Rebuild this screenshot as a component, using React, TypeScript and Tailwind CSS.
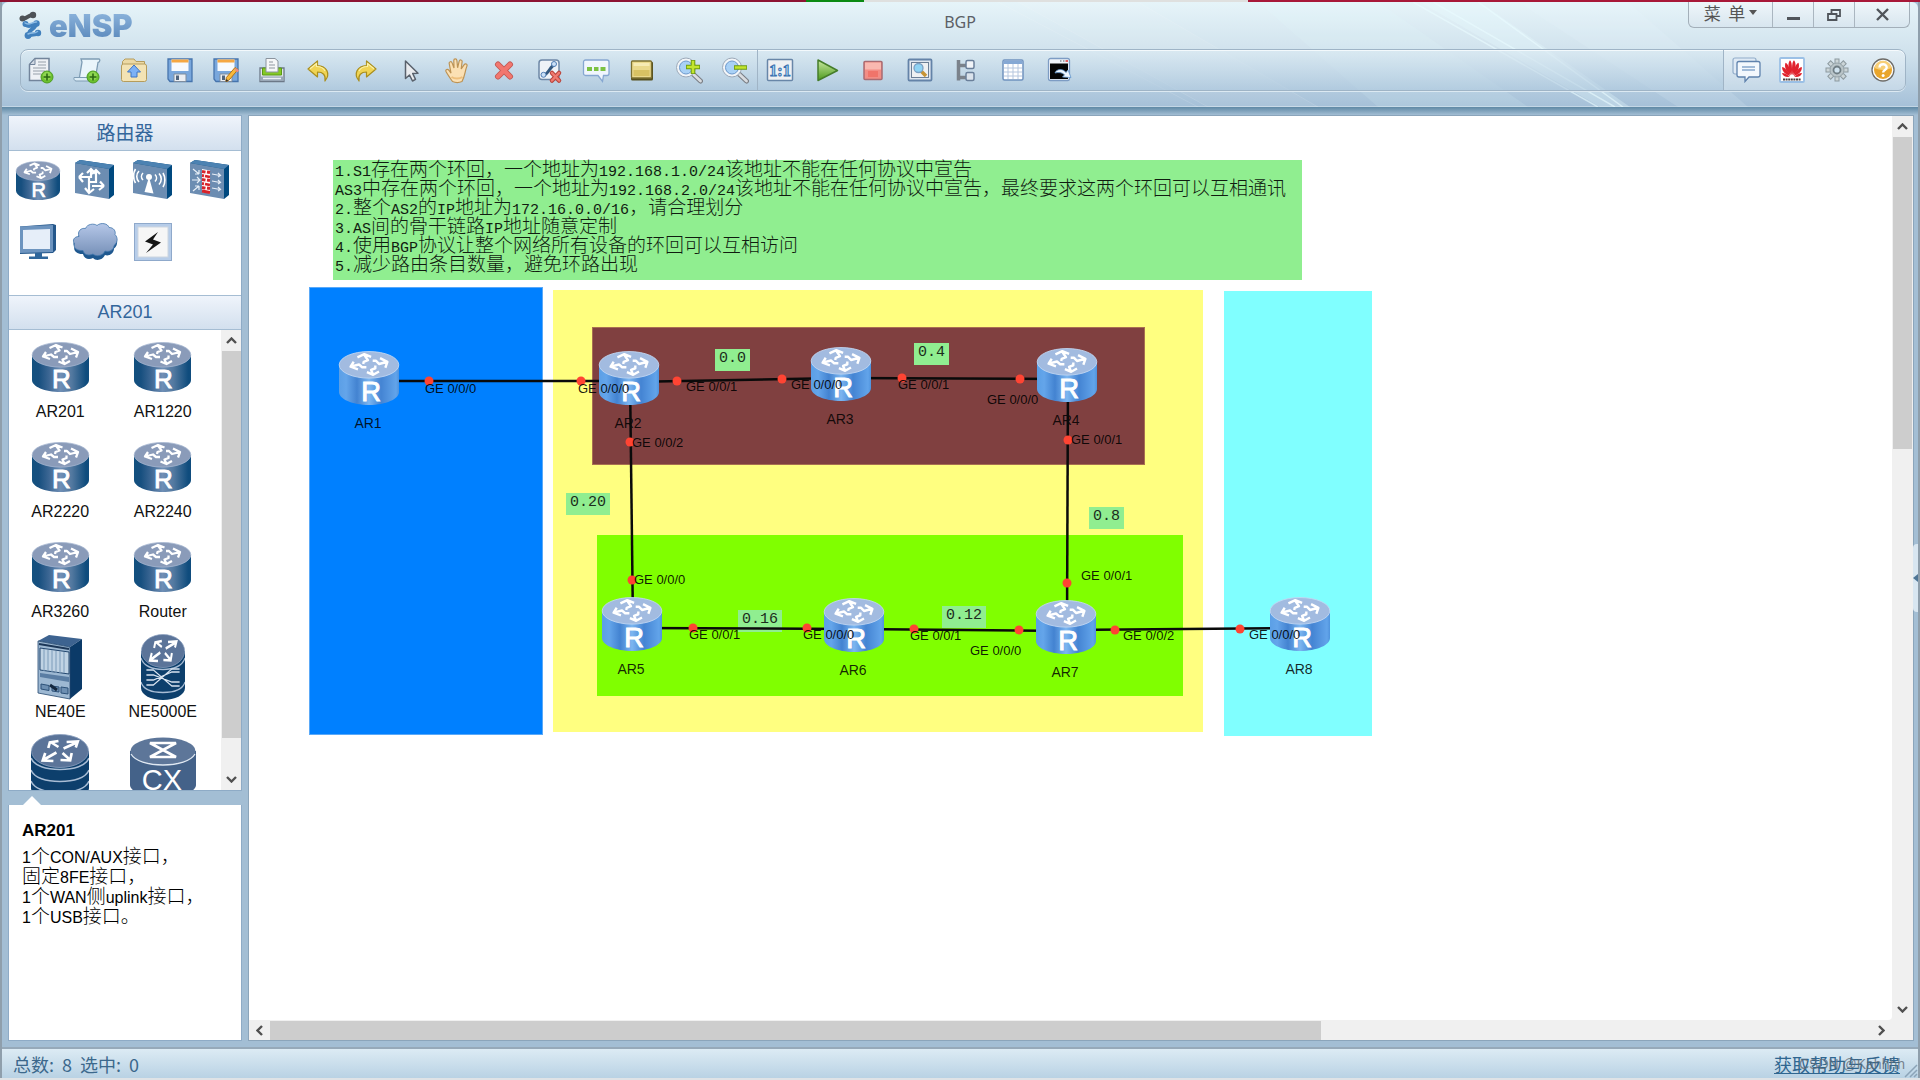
import React from "react";

type Kids = { children?: React.ReactNode };

/* ---------- text ---------- */

const CJK = /([\u3000-\u303f\u4e00-\u9fff\uff00-\uffef]+)/;

/** Sets Chinese runs a little larger than the Latin text around them. */
function Mixed({ text }: { text: string }) {
  return (
    <>
      {text.split(CJK).map((run, i) =>
        CJK.test(run) ? (
          <span key={i} className="font-['Noto_Sans_CJK_SC',sans-serif] text-[19px] font-light">
            {run}
          </span>
        ) : (
          run
        ),
      )}
    </>
  );
}

/* ---------- toolbar icons ---------- */

function Ico({ children }: Kids) {
  return (
    <svg width="28" height="28" viewBox="0 0 28 28" fill="none" aria-hidden="true">
      {children}
    </svg>
  );
}

const Plus = ({ x = 19, y = 21 }: { x?: number; y?: number }) => (
  <g>
    <circle cx={x} cy={y} r="6" fill="#6cc02e" stroke="#4c9c22" />
    <circle cx={x} cy={y - 1} r="4.2" fill="#a5e468" opacity="0.6" />
    <path d={`M${x - 3.5} ${y}h7M${x} ${y - 3.5}v7`} stroke="#2c6a12" strokeWidth="1.6" />
  </g>
);

const NewFile = () => (
  <Ico>
    <path d="M2.500 8.500 8 2.500h14v22h-19.500z" fill="#eef1f5" stroke="#72849b" strokeWidth="1.5" />
    <path d="M2.500 8.500 8 2.500v6z" fill="#d0d8e2" stroke="#72849b" />
    <path d="M11 6h8M11 9h8M6 12h13M6 15h12M6 18h8" stroke="#b4bac2" strokeWidth="1.5" />
    <Plus x={20} y={21} />
  </Ico>
);
const NewPaper = () => (
  <Ico>
    <path d="M8 3h18c1 0 1.500 3-1 3.500L22 24H6L9 6z" fill="#eaf5fb" stroke="#7e9cb4" strokeWidth="1.3" />
    <path d="M1 21.500h14c-1 2 0 3.500 1 3.500H3c-1.500 0-2.500-2-2-3.500z" fill="#dcecf6" stroke="#7e9cb4" />
    <Plus x={20} y={21} />
  </Ico>
);
const Folder = () => (
  <Ico>
    <path d="M2.500 5.500 5 3h9l2 2.500h8.500v4h-22z" fill="#ecd9a4" stroke="#b59c5c" />
    <rect x="1.500" y="8" width="25" height="17.500" rx="2" fill="#f3e3b4" stroke="#b59c5c" />
    <path d="m14 9 6.500 7H17v5h-6v-5H7.500z" fill="#7db1f5" stroke="#3f74c4" />
  </Ico>
);
const Disk = ({ edit = false }: { edit?: boolean }) => (
  <Ico>
    <path d="M2 3h24v22.500H4L2 23z" fill="#79a7dc" stroke="#4674ad" strokeWidth="1.3" />
    <path d="M5.500 3.500h17V15h-17z" fill="#f7fafd" />
    <path d="M5.500 3.500h17v3h-17z" fill="#f5a742" />
    <path d="M8 18h12v7.500H8z" fill="#eceff3" stroke="#7f8d9e" />
    <path d="M10 19.500h3V24h-3z" fill="#51657e" />
    {edit && (
      <g>
        <path d="M26 13.500 18 23l-3 2.500-1.200-.4.6-3.600 8.600-10z" fill="#f9b93c" stroke="#b0741c" />
        <path d="m24 12 3 2.500-1.500 2-3-2.800z" fill="#ec8b83" />
        <path d="m13.600 25.800.8-2.800 2 1.800z" fill="#333" />
      </g>
    )}
  </Ico>
);
const Printer = () => (
  <Ico>
    <path d="M2 12h24v13.500H2z" fill="#dfe4ea" stroke="#6c7888" strokeWidth="1.3" />
    <path d="M2.500 20.500h23v4.500h-23z" fill="#9aa8b8" />
    <path d="M4.500 12h19v7h-19z" fill="#84c924" stroke="#5b9a14" />
    <path d="M8 2.500h9L20 5v11H8z" fill="#f6f7f8" stroke="#8b949e" />
    <path d="M11 6h4M11 9h6M11 12h6" stroke="#8f979f" />
    <path d="M5 22.500h18" stroke="#eef2f6" strokeWidth="1.500" />
  </Ico>
);
const Undo = ({ flip = false }: { flip?: boolean }) => (
  <Ico>
    <g transform={flip ? "translate(28 0) scale(-1 1)" : undefined}>
      <path
        d="M3 13 12.500 5v4.500c9 .5 13.500 8 7.500 15.500 1-6-2-9-7.500-9V21z"
        fill="#f0d454"
        stroke="#a98e1e"
        strokeWidth="1.200"
        strokeLinejoin="round"
      />
      <path d="m5 12.800 6.500-5.300v3c4 0 7 1.500 8.500 4.500" stroke="#fbf1a8" strokeWidth="1.200" />
    </g>
  </Ico>
);
const Pointer = () => (
  <Ico>
    <path d="M8.500 5v17.500l4-3.500 3 6 3-1.700-2.800-5.800 5.300-.3z" fill="#e9ebee" stroke="#59616c" strokeWidth="1.500" strokeLinejoin="round" />
  </Ico>
);
const Hand = () => (
  <Ico>
    <path
      d="M9.500 25.500C7 22 4.500 18.500 3 15.500c-.8-1.800 1.500-3 2.800-1.300l2.200 3-1.800-9.700c-.3-2 2.300-2.500 2.900-.6L11 12l-.2-7.500c0-2.200 2.900-2.200 3.100 0l.7 7.300 1.600-6.600c.6-2 3.200-1.400 2.900.6L18.200 13l3-4.400c1.200-1.600 3.400-.4 2.700 1.500-2 5-1.900 10-4.900 15.400-3 1.300-6.500 1.300-9.500 0z"
      fill="#fbe0b4"
      stroke="#bd9355"
      strokeWidth="1.200"
    />
    <path d="M8.500 21c3 2 8 2 11 0" stroke="#eebf7c" strokeWidth="2" />
  </Ico>
);
const Cross = () => (
  <Ico>
    <path d="m8 8.500 12 12M20 8.500l-12 12" stroke="#c25a55" strokeWidth="6" strokeLinecap="round" />
    <path d="m8 8.500 12 12M20 8.500l-12 12" stroke="#f2776f" strokeWidth="4.200" strokeLinecap="round" />
  </Ico>
);
const CutLink = () => (
  <Ico>
    <rect x="3" y="4" width="20" height="19.500" rx="3" fill="#eef2f7" stroke="#6d87a6" strokeWidth="1.500" />
    <path d="M8 19c5-1.500 6-9 11.500-11" stroke="#33587f" strokeWidth="3" />
    <circle cx="7.500" cy="18.800" r="2.500" fill="#cbe0f7" stroke="#4f7db4" />
    <circle cx="18" cy="8" r="2.500" fill="#cbe0f7" stroke="#4f7db4" />
    <path d="m16 17 7 7.500M23 17l-7 7.500" stroke="#b8443c" strokeWidth="4.500" strokeLinecap="round" />
    <path d="m16 17 7 7.500M23 17l-7 7.500" stroke="#f07a70" strokeWidth="2.500" strokeLinecap="round" />
  </Ico>
);
const Speech = () => (
  <Ico>
    <path d="M3.500 4h21.500a2 2 0 0 1 2 2v11.500a2 2 0 0 1-2 2h-3.500l-1 6-4.500-6H3.500a2 2 0 0 1-2-2V6a2 2 0 0 1 2-2z" fill="#f0f6fd" stroke="#86a7d1" strokeWidth="1.300" />
    <path d="M5 11h5v4H5zM12 11h4.500v4H12zM18.500 11h5v4h-5z" fill="#7cc243" />
  </Ico>
);
const Palette = () => (
  <Ico>
    <rect x="3" y="5.500" width="22" height="19" rx="1.500" fill="#56501f" />
    <rect x="3.500" y="5" width="20" height="17" rx="1" fill="#ead98c" stroke="#7d7132" strokeWidth="1.300" />
    <path d="M5.500 14h16v6h-16z" fill="#d8c263" />
    <path d="M5.500 7h16v3h-16z" fill="#f6ebb4" />
  </Ico>
);
const Zoom = ({ out = false }: { out?: boolean }) => (
  <Ico>
    <path d="m17 17 8.500 8" stroke="#7b7f86" strokeWidth="5" strokeLinecap="round" />
    <path d="m17 17 8.500 8" stroke="#d9dce0" strokeWidth="2.800" strokeLinecap="round" />
    <circle cx="11" cy="11.500" r="8" fill="#a9d1f6" stroke="#f2f5f8" strokeWidth="3.400" />
    <circle cx="11" cy="11.500" r="9.500" stroke="#9aa8b8" />
    <circle cx="11" cy="11.500" r="6.500" stroke="#6796cc" />
    <path d={out ? "M13 11.500h13" : "M11 11h14M18 4v14"} stroke="#6c9a12" strokeWidth="4.600" />
    <path d={out ? "M13.800 11.500h11.500" : "M11.800 11h12.400M18 4.800v12.400"} stroke="#c3e52d" strokeWidth="2.600" />
  </Ico>
);
const OneToOne = () => (
  <Ico>
    <rect x="1.500" y="3.500" width="25" height="21" rx="1" fill="#eef0f3" stroke="#6886a8" strokeWidth="1.500" />
    <text x="14" y="20" textAnchor="middle" className="font-['Liberation_Serif',serif] text-[16px] font-bold" fill="#b9dcf8" stroke="#3a72b0" strokeWidth="1">
      1:1
    </text>
  </Ico>
);
const Play = () => (
  <Ico>
    <defs>
      <linearGradient id="play" x1="0" y1="0" x2="0" y2="1">
        <stop offset="0" stopColor="#c8e8a0" />
        <stop offset="1" stopColor="#4c9a1c" />
      </linearGradient>
    </defs>
    <path d="M5 4v20.500L24.500 14.500z" fill="url(#play)" stroke="#457d2a" strokeWidth="1.500" strokeLinejoin="round" />
  </Ico>
);
const Stop = () => (
  <Ico>
    <rect x="5" y="5.500" width="18" height="18" rx="1" fill="#f28d85" stroke="#a86b72" strokeWidth="1.500" />
    <path d="M6 6.500h16v7H6z" fill="#f9b8b0" />
    <path d="M9 15h10v6H9z" fill="#f06a5e" opacity=".7" />
  </Ico>
);
const Inspect = () => (
  <Ico>
    <rect x="2.500" y="3.500" width="23" height="21" rx="1" fill="#dfe7f0" stroke="#6483a8" strokeWidth="1.800" />
    <rect x="5.500" y="6.500" width="17" height="15" fill="#eef0f2" stroke="#6c7f96" />
    <path d="m15 15 5 5" stroke="#c79334" strokeWidth="3.500" />
    <circle cx="12.500" cy="12" r="4.500" fill="#8fd3f4" stroke="#7ba0c4" strokeWidth="1.300" />
  </Ico>
);
const Tree = () => (
  <Ico>
    <path d="M6.500 4v20.500M5 9.500h10M6 21.500h10" stroke="#7b828b" strokeWidth="3.500" />
    <rect x="14" y="4.500" width="8" height="8" rx="1.500" fill="#f1f4f8" stroke="#6a7f9a" strokeWidth="1.500" />
    <rect x="14" y="16.500" width="8" height="8" rx="1.500" fill="#dbe3ec" stroke="#6a7f9a" strokeWidth="1.500" />
  </Ico>
);
const Grid = () => (
  <Ico>
    <rect x="4" y="4" width="20" height="20" rx="1.500" fill="#fff" stroke="#6f92be" strokeWidth="1.500" />
    <path d="M4.500 4.500h19v3.500h-19z" fill="#85a8d4" />
    <path d="M5 12h18M5 16h18M5 20h18M9 8v15M14 8v15M19 8v15" stroke="#b5c6de" />
  </Ico>
);
const Terminal = () => (
  <Ico>
    <rect x="3.500" y="2.500" width="21" height="22" rx="2" fill="#f0f4f9" stroke="#7d9cc4" strokeWidth="1.300" />
    <path d="M5 7.500h18V23H5z" fill="#050505" />
    <path d="M15 5h1.500M18 5h1.500" stroke="#8b9098" strokeWidth="1.500" />
    <path d="M20.500 5H23" stroke="#d33" strokeWidth="1.700" />
    <path d="M10 17c1-4 8-5 11-.5l2-2.500 3 7.500-8.500-.5 2-2.200c-2.500-2.500-6-2.600-9.500-1.800z" fill="#eef6ff" stroke="#5f94cc" strokeWidth=".8" />
  </Ico>
);
const Chat = () => (
  <svg width="32" height="28" viewBox="0 0 32 28" fill="none" aria-hidden="true">
    <rect x="3" y="2" width="23" height="16" rx="2" fill="#dfeaf5" stroke="#91acc9" strokeWidth="1.200" />
    <path d="M9 5.500h19a2 2 0 0 1 2 2V19a2 2 0 0 1-2 2H19l-4 4.500V21H9a2 2 0 0 1-2-2V7.500a2 2 0 0 1 2-2z" fill="#f3f8fd" stroke="#5f82ad" strokeWidth="1.300" />
    <path d="M12 11h13M12 14h13" stroke="#86a6cc" strokeWidth="1.300" />
  </svg>
);
const Flower = () => (
  <Ico>
    <rect x="2" y="2" width="24" height="24" rx="1" fill="#fff" stroke="#9bc0e6" strokeWidth="1.800" />
    <g fill="#e0222d">
      <path d="M13.600 19C10 14 9.500 7 12 4.200c1.800 1 2.500 8 1.600 14.800z" />
      <path d="M12.800 19.300C8 15.500 6 11 7.500 6.800c2.500.7 5 6.500 5.300 12.500z" />
      <path d="M12.200 20C7 18.500 3.800 15 4.200 11c2.300.2 6.500 4.500 8 9z" />
      <path d="M11.800 20.800c-4 .6-7-.8-7.800-3.800 2-.2 5.500 1.500 7.800 3.800z" />
      <path d="M14.400 19C18 14 18.500 7 16 4.200c-1.800 1-2.500 8-1.600 14.800z" />
      <path d="M15.200 19.300C20 15.500 22 11 20.500 6.800c-2.500.7-5 6.500-5.300 12.500z" />
      <path d="M15.800 20c5.200-1.500 8.400-5 8-9-2.300.2-6.500 4.500-8 9z" />
      <path d="M16.200 20.800c4 .6 7-.8 7.800-3.800-2-.2-5.500 1.500-7.800 3.800z" />
    </g>
    <path d="M5 23.500h18" stroke="#4a3f40" strokeWidth="1.800" strokeDasharray="2 .6" />
  </Ico>
);
const Gear = () => (
  <Ico>
    <g stroke="#8c999f" strokeWidth="5">
      {[0, 45, 90, 135].map((a) => (
        <path key={a} d="M14 2.500v23" transform={`rotate(${a} 14 14)`} />
      ))}
    </g>
    <g stroke="#cbd5d8" strokeWidth="3">
      {[0, 45, 90, 135].map((a) => (
        <path key={a} d="M14 3.500v21" transform={`rotate(${a} 14 14)`} />
      ))}
    </g>
    <circle cx="14" cy="14" r="7" fill="#b9c4c8" stroke="#97a4aa" />
    <circle cx="14" cy="14" r="3.500" fill="#cfe2ee" stroke="#6f7d84" strokeWidth="1.800" />
  </Ico>
);
const Help = () => (
  <Ico>
    <circle cx="14" cy="14" r="11" fill="#fdfdfb" stroke="#6e6c68" strokeWidth="1.300" />
    <circle cx="14" cy="14" r="9" fill="#e9a52b" />
    <path d="M5.500 12a8.600 8.600 0 0 1 17 0c-5 2.500-12 2.500-17 0z" fill="#f7cf78" />
    <path d="M10.500 11.500c.2-4.500 7.300-4.300 7.200 0 0 2.600-3.500 2.400-3.600 5" stroke="#fff" strokeWidth="2.400" />
    <circle cx="14.100" cy="19.500" r="1.500" fill="#fff" />
  </Ico>
);

/* ---------- device icons ---------- */

type Skin = "device" | "node" | "category";

function Router({ w, h, skin }: { w: number; h: number; skin: Skin }) {
  const node = skin === "node";
  const top = node ? "#a2bbe0" : "#8a9bb9";
  const rim = node ? "#c3d8f3" : "#a6b6d0";
  const id = `body-${skin}`;
  return (
    <svg width={w} height={h} viewBox="0 0 57 50" preserveAspectRatio="none" className="overflow-visible" aria-hidden="true">
      <defs>
        <linearGradient id={id}>
          <stop offset="0" stopColor={node ? "#5b9fe6" : "#12507f"} />
          <stop offset=".12" stopColor={node ? "#64a5ea" : "#174f7f"} />
          <stop offset=".3" stopColor={node ? "#4383d1" : "#3d6794"} />
          <stop offset=".5" stopColor={node ? "#7cb6f0" : "#6f8fb6"} />
          <stop offset=".7" stopColor={node ? "#4484d3" : "#52789f"} />
          <stop offset=".95" stopColor={node ? "#62a4ea" : "#0f4c7d"} />
          <stop offset="1" stopColor={node ? "#4f93dd" : "#0f4c7d"} />
        </linearGradient>
      </defs>
      <path d="M0 13v25c0 6.500 12.500 12 28.500 12S57 44.500 57 38V13z" fill={`url(#${id})`} />
      <ellipse cx="28.500" cy="12.800" rx="28.300" ry="12.300" fill={top} stroke={rim} strokeWidth=".8" />
      <g fill="none" stroke="#fff" strokeWidth="2.300" strokeLinejoin="round">
        <path d="m17.500 6 6.500-3 6.500 2.500M24 3.500l3.500 5-4 1.500-.5 2" />
        <path d="M39 6.500l7 3.500-2 5.500M46 10l-8 2-3-3h-3" />
        <path d="M14 10l-3 4.500 7 2.500M11 14.500l8-2 3 2.500h4" />
        <path d="M26.500 19.500l6 2.500 5.500-3M32.500 22l-2-4.500 4-1.500v-2.500" />
      </g>
      <text x={node ? 30.5 : 29.5} y="46" textAnchor="middle" className="font-['Liberation_Sans',sans-serif] text-[26px]" fill="#fff" stroke="#fff" strokeWidth=".9">
        R
      </text>
    </svg>
  );
}

/** Slanted slab used by the switch, wireless and firewall categories. */
function Slab({ children }: Kids) {
  return (
    <svg width="40" height="40" viewBox="0 0 40 40" fill="none" aria-hidden="true">
      <path d="M0 3 5 0l34 5v30l-5 4z" fill="#00497f" />
      <path d="M0 3 5 0l34 5-5 4z" fill="#4c82b2" />
      <path d="M0 3l34 6v30L0 33z" fill="#6c8db2" />
      {children}
    </svg>
  );
}
const SwitchIcon = () => (
  <Slab>
    <g stroke="#fff" strokeWidth="2.200">
      <path d="M4 17h12v-7M4 17l4-4M4 17l4 5M12 13l4-4 5 5" />
      <path d="M29 26H17M29 26l-4-4.500M29 26l-5 4M14 17v15M10 28l4 5 5-4" />
      <path d="M21 11v11h-8M17 14l4-4 4 4" />
    </g>
  </Slab>
);
const WirelessIcon = () => (
  <Slab>
    <path d="M16 17 11.500 32l9 1.500z" fill="#fff" />
    <circle cx="16" cy="17" r="3" fill="#fff" />
    <path d="M10 13c-2 2-2 5 0 7M6 11c-3 3-3 8 0 11M2.500 9c-2.500 4-2.500 10 0 14M22 14.500c2 2 2 5 0 7M26 13.500c3 3 3 8 0 11M30 13c2.500 4 2.500 10 0 14" stroke="#fff" strokeWidth="1.600" />
  </Slab>
);
const FirewallIcon = () => (
  <Slab>
    <path d="m12 9 8 1.500v23L12 32z" fill="#fff" />
    <path d="m12 11.500 3.500.6M17 12l3 .5M12 15.500l2 .3M15 16l5 1M12 19.500l3.500.6M17 20l3 .5M12 23.500l2 .3M15 24l5 1M12 27.500l3.500.6M17 28l3 .5M12 31l8 1.500" stroke="#d8232a" strokeWidth="2.800" />
    <path d="m3 9 6 5M9 14V10M9 14H5M2 20h8M7 17l3 3-3 3M3 31l6-5M9 26v4M9 26H5M22 14l8 1.500M28 13l2.500 2.500L28 17M22 21l8 1.500M28 20l2.500 2.500L28 24M22 28l8 1.500M28 27l2.500 2.500L28 31" stroke="#e8eff7" strokeWidth="1.200" />
  </Slab>
);
const MonitorIcon = () => (
  <svg width="38" height="36" viewBox="0 0 38 36" aria-hidden="true">
    <path d="M1 2.500 34 0l3 1v25l-3 3L1 30z" fill="#24578b" />
    <path d="M1 2.500 34 1v27L1 29z" fill="#6d94bf" />
    <path d="m4 6 27-1v20H4z" fill="#e6eef9" />
    <path d="M16 29h7v3.500h6V35H10v-2.500h6z" fill="#2f669b" />
  </svg>
);
const CloudIcon = () => (
  <svg width="46" height="38" viewBox="0 0 46 38" aria-hidden="true">
    <defs>
      <linearGradient id="cloud" x1="0" y1="0" x2="0" y2="1">
        <stop offset="0" stopColor="#b5c7e8" />
        <stop offset="1" stopColor="#7690b8" />
      </linearGradient>
    </defs>
    <path d="M7 15c-2-5 2-9 6.500-8C15 2 22 1 25 4c4-4 11-2 12 2 5 0 7 4 6 7 3 3 3 8-1 11 0 5-5 8-9 6.500-2 5-9 6.500-12 3-4 2-9 1-10-4C5 30 1 26 2.500 22 0 19 2 15 7 15z" fill="#1f588f" transform="translate(0 1.500)" />
    <path d="M7 13.500c-2-5 2-9 6.500-8C15 1 22 0 25 2.500c4-3.500 11-2 12 2 5 0 7 4 6 7 3 3 3 8-1 11 0 4.500-5 7-9 5.500-2 5-9 6-12 3-4 2-9 1-10-3.500C5 28 1 25 2.500 20.500 0 17.500 2 13.500 7 13.500z" fill="url(#cloud)" stroke="#4377ad" strokeWidth=".8" />
  </svg>
);
const BoltIcon = () => (
  <svg width="38" height="38" viewBox="0 0 38 38" aria-hidden="true">
    <rect x=".5" y=".5" width="37" height="37" fill="#b7cde9" stroke="#8fa9cb" />
    <rect x="4" y="4" width="30" height="30" fill="#f6f6f6" stroke="#cdd6e0" />
    <path d="M24 9 11 18.500l8 3L12 30l15-10.500-8-3z" fill="#151515" />
  </svg>
);

const RackIcon = () => (
  <svg width="46" height="66" viewBox="0 0 46 66" aria-hidden="true">
    <path d="M1 7 12 1l33 4-12 8z" fill="#3d6390" />
    <path d="m33 13 12-8v50L33 65z" fill="#0b3a68" />
    <path d="M1 7l32 6v52L1 59z" fill="#9db8d2" stroke="#23476f" strokeWidth=".8" />
    <path d="m3 14 29 4v22L3 36z" fill="#c0d3e4" stroke="#23476f" />
    <path d="M7 15v22M11 16v21M15 16v22M19 17v22M23 17v22M27 18v21" stroke="#7d9cba" />
    <path d="m3 39 29 4v5L3 43z" fill="#5a7da3" />
    <path d="m4 50 8 1.500v5L4 55zM15 52l7 1v5l-7-1zM24 53l7 1v6l-7-1z" fill="#6d8fb2" stroke="#2c5178" />
    <path d="m2 10 30 5" stroke="#1b3657" strokeWidth="2" />
    <path d="m13 51 7 5" stroke="#14283f" strokeWidth="3" />
  </svg>
);

const OutArrows = () => (
  <g fill="none" stroke="#fff" strokeWidth="2.600">
    <path d="M27 13 20 8.500M17 14l1.500-5.500L27 7" />
    <path d="M32 14.500 45 8.500M35 8l11-.5-2 6" />
    <path d="M25 18.500 12 26M14 19l-2.500 7.500L22 27" />
    <path d="m31 19 7 6.500M29 26l9.500.5L40 19" />
  </g>
);

const Stack = ({ w, h, weave = false }: { w: number; h: number; weave?: boolean }) => (
  <svg width={w} height={h} viewBox="0 0 57 66" preserveAspectRatio="none" aria-hidden="true">
    <path d="M0 17v37c0 7 13 12 28.500 12S57 61 57 54V17z" fill="#0d3f6c" />
    <ellipse cx="28.500" cy="17" rx="28" ry="16.500" fill="#5b7499" stroke="#8ba0bf" strokeWidth=".8" />
    <g fill="none" stroke="#a9bdd5" strokeWidth="1.500">
      <path d="M0 24c3 8 15 11.500 28.500 11.500S54 32 57 24" />
      {weave ? (
        <>
          <path d="M0 48c3 8 15 10.500 28.500 10.500S54 56 57 48" />
          <path d="M7 36h9l24 16h10M7 41h9l24 7h10M7 46h9l24-8h10M7 51h9l24-16h10" stroke="#d9e4f0" strokeWidth="1.300" />
        </>
      ) : (
        <path d="M0 36c3 8 15 11.500 28.500 11.500S54 44 57 36M0 47c3 8 15 11.500 28.500 11.500S54 55 57 47" />
      )}
    </g>
    <OutArrows />
  </svg>
);

const CxIcon = () => (
  <svg width="66" height="60" viewBox="0 0 66 60" className="overflow-visible" aria-hidden="true">
    <path d="M0 14v34c0 7 15 12 33 12s33-5 33-12V14z" fill="#446289" />
    <ellipse cx="33" cy="14" rx="32.500" ry="13.500" fill="#5d7699" />
    <path d="M1 17c4 7 17 11 32 11s28-4 32-11" fill="none" stroke="#dfe8f2" strokeWidth="1.300" />
    <path d="M20 6h26L20 20h26z" fill="none" stroke="#fff" strokeWidth="2.600" />
    <text x="32" y="53" textAnchor="middle" className="font-['Liberation_Sans',sans-serif] text-[29px]" fill="#fff">
      CX
    </text>
  </svg>
);

/* ---------- chrome ---------- */

const mainTools: [string, React.ReactNode][] = [
  ["新建拓扑", <NewFile />],
  ["新建试卷", <NewPaper />],
  ["打开", <Folder />],
  ["保存", <Disk />],
  ["另存为", <Disk edit />],
  ["打印", <Printer />],
  ["撤销", <Undo />],
  ["重做", <Undo flip />],
  ["选择", <Pointer />],
  ["拖动", <Hand />],
  ["删除", <Cross />],
  ["删除连线", <CutLink />],
  ["文本", <Speech />],
  ["调色板", <Palette />],
  ["放大", <Zoom />],
  ["缩小", <Zoom out />],
];
const runTools: [string, React.ReactNode][] = [
  ["原始大小", <OneToOne />],
  ["启动设备", <Play />],
  ["停止设备", <Stop />],
  ["数据抓包", <Inspect />],
  ["显示所有接口", <Tree />],
  ["显示网格", <Grid />],
  ["打开命令行", <Terminal />],
];
const sideTools: [string, React.ReactNode][] = [
  ["论坛", <Chat />],
  ["官网", <Flower />],
  ["设置", <Gear />],
  ["帮助", <Help />],
];

function Tools({ items }: { items: [string, React.ReactNode][] }) {
  return (
    <>
      {items.map(([label, icon]) => (
        <button key={label} aria-label={label} className="flex h-10 w-10 shrink-0 items-center justify-center">
          {icon}
        </button>
      ))}
    </>
  );
}

function Header() {
  return (
    <header className="relative flex h-[105px] shrink-0 flex-col overflow-hidden rounded-t-md bg-linear-to-b from-[#e6f4f9] via-[#cfe1ec] to-[#a5c0d8] shadow-[inset_0_-1px_0_#c3d6e5]">
      <svg className="absolute inset-y-0 right-0 h-full w-[960px]" viewBox="0 0 960 105" fill="none" aria-hidden="true">
        <path d="M40 0 240 105M60 0h120l180 105H250z" stroke="#fff" strokeOpacity=".12" fill="#fff" fillOpacity=".05" />
        <path d="M300 0h120l150 105H420z" fill="#e8fbff" fillOpacity=".12" />
        <path d="M462 0h60l150 105h-30z" fill="#e8fbff" fillOpacity=".3" />
        <path d="m455 0 185 105M475 0l182 105M520 0l145 105" stroke="#eafcff" strokeOpacity=".6" strokeWidth="1.500" />
        <path d="M560 0h110l120 105H720z" fill="#e8fbff" fillOpacity=".15" />
      </svg>
      <div className="relative grid h-[47px] grid-cols-3">
        <div className="flex items-center gap-1 pl-[17px]">
          <svg width="26" height="30" viewBox="0 0 26 30" aria-hidden="true">
            <g strokeLinecap="round" fill="none">
              <path d="M3.500 7.500C7 9 8 4 14 4" stroke="#4d5257" strokeWidth="4" />
              <g fill="#4d5257" stroke="none">
                <circle cx="3.500" cy="7.500" r="3" />
                <circle cx="14" cy="4" r="3.200" />
              </g>
              <path d="M7 13.500c4 4 6-1 11-1M17 14c-3 5-6 4-7 8M10 25c3-3 6 0 9-3" stroke="#4180bd" strokeWidth="4" />
              <g fill="#4180bd">
                <circle cx="6.500" cy="13" r="3" />
                <circle cx="17.500" cy="12.500" r="3.200" />
                <circle cx="9" cy="24.500" r="3.400" />
                <circle cx="19" cy="22" r="3.200" />
              </g>
              <path d="M6 12c4 3 7-1 11.500-1M9 23c4-2 6 0 9.500-2.500" stroke="#8dbbe4" strokeWidth="1.500" />
            </g>
          </svg>
          <span className="bg-linear-to-b from-[#93b9e0] to-[#5484b8] bg-clip-text font-[Inter,sans-serif] text-[31px] leading-9 font-black text-transparent">eNSP</span>
        </div>
        <h1 className="pt-2 text-center font-['Noto_Sans',sans-serif] text-[16px] leading-6 text-[#5c5f66]">BGP</h1>
        <div className="mr-2 flex h-[26px] justify-self-end divide-x divide-[#aab6c0] rounded-b-md border border-t-0 border-[#a3afb9] bg-linear-to-b from-[#eff6fa] to-[#d8e6ef] text-[#555]">
          <button className="flex w-[84px] items-center justify-center gap-1 pb-1 font-['Noto_Sans_CJK_SC',sans-serif] text-[17px] leading-[22px]">
            {"菜\u00a0\u00a0单"}
            <svg width="8" height="5" viewBox="0 0 8 5" fill="#555" aria-hidden="true">
              <path d="M0 0h8L4 5z" />
            </svg>
          </button>
          <button aria-label="最小化" className="flex w-[41px] items-center justify-center pt-2">
            <svg width="13" height="4" viewBox="0 0 13 4" aria-hidden="true">
              <path d="M0 0h13v3H0z" fill="#50555b" />
            </svg>
          </button>
          <button aria-label="还原" className="flex w-[41px] items-center justify-center">
            <svg width="14" height="12" viewBox="0 0 14 12" fill="none" stroke="#50555b" strokeWidth="1.800" aria-hidden="true">
              <path d="M4.500 4V1H13v6h-3M1 5h8.500v6H1z" />
            </svg>
          </button>
          <button aria-label="关闭" className="flex w-[54px] items-center justify-center">
            <svg width="13" height="13" viewBox="0 0 13 13" stroke="#50555b" strokeWidth="2.400" aria-hidden="true">
              <path d="m1 1 11 11M12 1 1 12" />
            </svg>
          </button>
        </div>
      </div>
      <div className="relative mr-[12px] ml-[18px] flex h-[42px] items-center rounded-lg border border-[#9fb4c6] bg-linear-to-b from-[#dcebf3]/70 to-[#b0cadf]/60 shadow-[inset_0_1px_0_#f3f9fc,0_1px_0_#dce9f2]">
        <div className="flex w-[734px] justify-between">
          <Tools items={mainTools} />
        </div>
        <div className="mx-[2px] h-full w-px bg-[#a0b4c6]" />
        <div className="flex w-[319px] justify-between">
          <Tools items={runTools} />
        </div>
        <div className="ml-auto flex h-full w-[182px] items-center justify-between rounded-r-md border-l border-[#a0b4c6] bg-white/25 px-[2px]">
          <Tools items={sideTools} />
        </div>
      </div>
    </header>
  );
}

const Chevron = ({ turn }: { turn: string }) => (
  <svg width="11" height="7" viewBox="0 0 11 7" fill="none" stroke="#505050" strokeWidth="2.400" className={turn} aria-hidden="true">
    <path d="m1 6 4.500-4.500L10 6" />
  </svg>
);

/* ---------- sidebar ---------- */

const categories: [string, React.ReactNode][] = [
  ["路由器", <Router w={44} h={39} skin="category" />],
  ["交换机", <SwitchIcon />],
  ["无线局域网", <WirelessIcon />],
  ["防火墙", <FirewallIcon />],
  ["终端", <MonitorIcon />],
  ["其他设备", <CloudIcon />],
  ["设备连线", <BoltIcon />],
];

const device = <Router w={57} h={50} skin="device" />;
const devices: [string, React.ReactNode][] = [
  ["AR201", device],
  ["AR1220", device],
  ["AR2220", device],
  ["AR2240", device],
  ["AR3260", device],
  ["Router", device],
  ["NE40E", <RackIcon />],
  ["NE5000E", <Stack w={44} h={66} weave />],
  ["NE9000", <Stack w={58} h={66} />],
  ["CX", <CxIcon />],
];

const panelTitle =
  "flex h-[35px] shrink-0 items-center justify-center border-b border-[#a5bdd3] bg-linear-to-b from-[#eff4fb] to-[#d3e0ee] text-[#33669b]";

function Sidebar() {
  return (
    <aside className="flex w-[234px] shrink-0 flex-col">
      <div className="flex h-[676px] min-h-0 shrink flex-col border border-[#8eabc6] bg-white">
        <h2 className={`${panelTitle} pb-0.5 font-['Noto_Sans_CJK_SC',sans-serif] text-[19px]`}>路由器</h2>
        <div className="grid h-[144px] shrink-0 auto-rows-[56px] grid-cols-4 content-start gap-y-[6px] pt-px pr-0.5">
          {categories.map(([label, icon]) => (
            <button key={label} aria-label={label} className="flex items-center justify-center">
              {icon}
            </button>
          ))}
        </div>
        <h2 className={`${panelTitle} border-t font-['Liberation_Sans',sans-serif] text-[18px]`}>AR201</h2>
        <div className="flex min-h-0 flex-1">
          <ul className="grid min-w-0 flex-1 auto-rows-[100px] grid-cols-2 overflow-hidden pt-px pr-[7px]">
            {devices.map(([name, icon]) => (
              <li key={name}>
                <button className="flex w-full flex-col items-center font-['Liberation_Sans',sans-serif] text-[16px] leading-5 text-[#111]">
                  <span className="flex h-[71px] items-center">{icon}</span>
                  {name}
                </button>
              </li>
            ))}
          </ul>
          <div className="flex w-[20px] shrink-0 flex-col items-center bg-[#f0f0f0]">
            <button aria-label="向上滚动" className="flex h-[21px] shrink-0 items-center">
              <Chevron turn="" />
            </button>
            <div className="h-[387px] w-[19px] bg-[#cdcdcd]" />
            <button aria-label="向下滚动" className="mt-auto flex h-[21px] shrink-0 items-center">
              <Chevron turn="rotate-180" />
            </button>
          </div>
        </div>
      </div>
      <svg width="18" height="9" viewBox="0 0 18 9" className="mt-[5px] ml-[15px] shrink-0" aria-hidden="true">
        <path d="M0 9 9 0l9 9z" fill="#fff" />
      </svg>
      <section className="flex-1 border border-t-0 border-[#8eabc6] bg-white px-[13px] pt-4 font-['Liberation_Sans',sans-serif] text-black">
        <h3 className="text-[17px] leading-5 font-bold">AR201</h3>
        <p className="mt-1 text-[16px] leading-5">
          {["1个CON/AUX接口，", "固定8FE接口，", "1个WAN侧uplink接口，", "1个USB接口。"].map((line) => (
            <span key={line} className="block h-5 whitespace-nowrap">
              <Mixed text={line} />
            </span>
          ))}
        </p>
      </section>
    </aside>
  );
}

/* ---------- topology ---------- */

const notes = [
  "1.S1存在两个环回，一个地址为192.168.1.0/24该地址不能在任何协议中宣告",
  "AS3中存在两个环回，一个地址为192.168.2.0/24该地址不能在任何协议中宣告，最终要求这两个环回可以互相通讯",
  "2.整个AS2的IP地址为172.16.0.0/16，请合理划分",
  "3.AS间的骨干链路IP地址随意定制",
  "4.使用BGP协议让整个网络所有设备的环回可以互相访问",
  "5.减少路由条目数量，避免环路出现",
];

const nodes: [string, number, number][] = [
  ["AR1", 90, 234],
  ["AR2", 350, 234],
  ["AR3", 562, 230],
  ["AR4", 788, 231],
  ["AR5", 353, 480],
  ["AR6", 575, 481],
  ["AR7", 787, 483],
  ["AR8", 1021, 480],
];

const links = [
  [120, 264, 380, 264],
  [380, 265, 592, 261],
  [592, 261, 818, 262],
  [819, 258, 818, 509],
  [381, 261, 384, 507],
  [384, 511, 605, 512],
  [605, 512, 817, 514],
  [817, 513, 1051, 511],
];

const dots = [
  [180, 264], [332, 264], [428, 264], [533, 262], [653, 261], [771, 262], [819, 323], [818, 466],
  [381, 325], [383, 463], [444, 511], [558, 511], [665, 512], [770, 513], [866, 513], [991, 512],
];

const ports: [string, number, number][] = [
  ["GE 0/0/0", 176, 272],
  ["GE 0/0/0", 329, 272],
  ["GE 0/0/1", 437, 270],
  ["GE 0/0/0", 542, 268],
  ["GE 0/0/1", 649, 268],
  ["GE 0/0/0", 738, 283],
  ["GE 0/0/1", 822, 323],
  ["GE 0/0/2", 383, 326],
  ["GE 0/0/0", 385, 463],
  ["GE 0/0/1", 440, 518],
  ["GE 0/0/0", 554, 518],
  ["GE 0/0/1", 661, 519],
  ["GE 0/0/0", 721, 534],
  ["GE 0/0/1", 832, 459],
  ["GE 0/0/2", 874, 519],
  ["GE 0/0/0", 1000, 518],
];

const subnets: [string, number, number][] = [
  ["0.0", 466, 232],
  ["0.4", 665, 226],
  ["0.20", 317, 376],
  ["0.8", 840, 390],
  ["0.16", 489, 493],
  ["0.12", 693, 489],
];

function Topology() {
  return (
    <div className="min-w-0 flex-1 overflow-hidden rounded-br-sm bg-white pt-px font-['Liberation_Sans',sans-serif]">
      <div className="relative">
        <div className="absolute top-[43px] left-[84px] h-[120px] w-[969px] bg-[#90ee90] pl-0.5 font-['Liberation_Mono',monospace] text-[15px] text-[#101c10]">
          {notes.map((line) => (
            <p key={line} className="h-[19px] leading-[15px] whitespace-nowrap">
              <Mixed text={line} />
            </p>
          ))}
        </div>
        <div className="absolute top-[170px] left-[60px] h-[448px] w-[234px] border border-[#5aa9f8] bg-[#0080ff]" />
        <div className="absolute top-[173px] left-[304px] h-[442px] w-[650px] bg-[#ffff80]" />
        <div className="absolute top-[210px] left-[343px] h-[138px] w-[553px] border border-[#a87050] bg-[#804040]" />
        <div className="absolute top-[418px] left-[348px] h-[161px] w-[586px] bg-[#80ff00]" />
        <div className="absolute top-[174px] left-[975px] h-[445px] w-[148px] bg-[#80ffff]" />
        {nodes.map(([name, x, y]) => (
          <span key={name} className="absolute w-14 text-center text-[14px] leading-4 text-black/85" style={{ left: x + 1, top: y + 64 }}>
            {name}
          </span>
        ))}
        {subnets.map(([net, x, y]) => (
          <span key={net} className="absolute h-[22px] bg-[#90ee90] px-[4px] font-['Liberation_Mono',monospace] text-[15px] leading-[19px] text-[#1c2c1c]" style={{ left: x, top: y }}>
            {net}
          </span>
        ))}
        <svg className="absolute top-0 left-0" width="1200" height="640" aria-hidden="true">
          {links.map(([x1, y1, x2, y2], i) => (
            <line key={i} x1={x1} y1={y1} x2={x2} y2={y2} stroke="#0a0a0a" strokeWidth="2.500" />
          ))}
          {dots.map(([x, y], i) => (
            <circle key={i} cx={x} cy={y} r="4.500" fill="#ff4433" />
          ))}
        </svg>
        {nodes.map(([name, x, y]) => (
          <div key={name} className="absolute" style={{ left: x, top: y }}>
            <Router w={60} h={54} skin="node" />
          </div>
        ))}
        {ports.map(([port, x, y], i) => (
          <span key={i} className="absolute text-[13px] leading-4 whitespace-nowrap text-black/90" style={{ left: x, top: y - 8 }}>
            {port}
          </span>
        ))}
      </div>
    </div>
  );
}

export default function App() {
  return (
    <div className="flex h-screen flex-col overflow-hidden bg-[#e4e8ec]">
      <div className="flex h-[2px] shrink-0">
        <div className="w-[42%] bg-[#8d1433]" />
        <div className="w-[3%] bg-[#0a8a12]" />
        <div className="w-[20%] bg-[#dfe0df]" />
        <div className="flex-1 bg-[#a81838]" />
      </div>
      <div className="flex min-h-0 flex-1 flex-col border-x-2 border-[#8f9fac] bg-[#a3bed4]">
        <Header />
        <div className="h-[8px] shrink-0 bg-linear-to-b from-[#5f89a5] to-[#a3bed4]" />
        <div className="flex min-h-0 flex-1 gap-[6px] pr-[4px] pb-[6px] pl-[6px]">
          <Sidebar />
          <main className="flex min-w-0 flex-1 flex-col border border-[#8ba5bb] bg-[#f0f0f0]">
            <div className="flex min-h-0 flex-1">
              <Topology />
              <div className="flex w-[21px] shrink-0 flex-col items-center">
                <button aria-label="向上滚动" className="flex h-[21px] shrink-0 items-center">
                  <Chevron turn="" />
                </button>
                <div className="h-[312px] w-[19px] bg-[#cdcdcd]" />
                <button aria-label="向下滚动" className="mt-auto flex h-[21px] items-center">
                  <Chevron turn="rotate-180" />
                </button>
              </div>
            </div>
            <div className="flex h-[20px] shrink-0 items-center pr-[21px]">
              <button aria-label="向左滚动" className="flex w-[21px] justify-center">
                <Chevron turn="-rotate-90" />
              </button>
              <div className="h-[19px] w-[1051px] bg-[#cdcdcd]" />
              <button aria-label="向右滚动" className="ml-auto flex w-[21px] justify-center">
                <Chevron turn="rotate-90" />
              </button>
            </div>
          </main>
          <div className="-mr-[4px] -ml-[7px] flex h-[68px] w-[5px] shrink-0 items-center justify-center self-center rounded-l bg-[#d8e6f1]">
            <svg width="5" height="8" viewBox="0 0 5 8" aria-hidden="true">
              <path d="M5 0v8L0 4z" fill="#4e7596" />
            </svg>
          </div>
        </div>
        <footer className="relative flex h-[31px] shrink-0 items-center justify-between border-t-2 border-[#96a9b9] bg-linear-to-b from-[#dcebf4] to-[#b9d2e4] pr-[18px] pl-[11px] font-['Noto_Sans_CJK_SC',sans-serif] text-[18px] leading-6 text-[#3c688c]">
          <p className="flex gap-2">
            <span>总数:</span>
            <span>8</span>
            <span>选中:</span>
            <span>0</span>
          </p>
          <a href="#help" className="text-[#2f6690] underline">
            获取帮助与反馈
          </a>
          <span className="absolute top-[5px] right-[13px] font-['Liberation_Sans',sans-serif] text-[14px] leading-5 text-[#5f6a74]/80">CSDN @Kahhhh</span>
          <svg className="absolute right-0 bottom-0" width="14" height="14" viewBox="0 0 14 14" stroke="#8ba4b8" strokeWidth="1.500" aria-hidden="true">
            <path d="M1 13 13 1M6 13l7-7M10 13l3-3" />
          </svg>
        </footer>
      </div>
      <div className="h-[2px] shrink-0 bg-[#dfe3e6]" />
    </div>
  );
}
